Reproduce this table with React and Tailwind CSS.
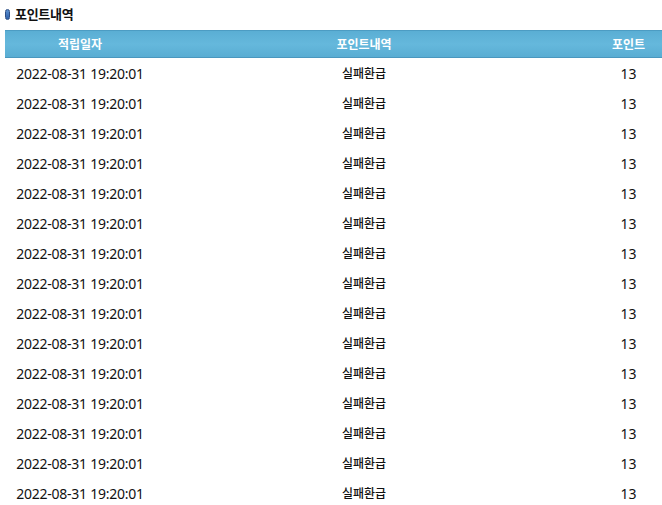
export default function App() {
  const rows = Array.from({ length: 15 });
  return (
    <div className="w-[662px] h-[505px] bg-white overflow-hidden" style={{ fontFamily: '"Noto Sans", "Noto Sans CJK KR", sans-serif' }}>
      <div className="flex items-center h-[30px] pl-[5px] pb-[2px]">
        <span className="w-[5px] h-[11px] rounded-[3px] bg-gradient-to-b from-[#5a8fd0] to-[#2f5fa8] border border-[#2d4f86]"></span>
        <span className="ml-[5px] text-[13px] font-bold text-[#111] tracking-[-0.3px]" style={{ fontFamily: '"Noto Sans CJK KR", sans-serif' }}>포인트내역</span>
      </div>
      <div className="ml-[5px]">
        <div className="grid grid-cols-[150px_440px_1fr] h-[28px] items-center text-white text-[12px] font-bold border-t border-[#4c9cc3] border-b border-b-[#4a97be] bg-gradient-to-b from-[#5aaed4] via-[#65b8dc] to-[#59add3]" style={{ fontFamily: '"Noto Sans CJK KR", sans-serif' }}>
          <div className="text-center">적립일자</div>
          <div className="text-center pr-[22px]">포인트내역</div>
          <div className="text-center">포인트</div>
        </div>
        {rows.map((_, i) => (
          <div key={i} className="grid grid-cols-[150px_440px_1fr] h-[30px] items-center text-[#111]">
            <div className="text-center text-[14px] tracking-[-0.25px]">2022-08-31 19:20:01</div>
            <div className="text-center pr-[22px] text-[12px] font-medium" style={{ fontFamily: '"Noto Sans CJK KR", sans-serif' }}>실패환급</div>
            <div className="text-center text-[14px]">13</div>
          </div>
        ))}
      </div>
    </div>
  );
}
